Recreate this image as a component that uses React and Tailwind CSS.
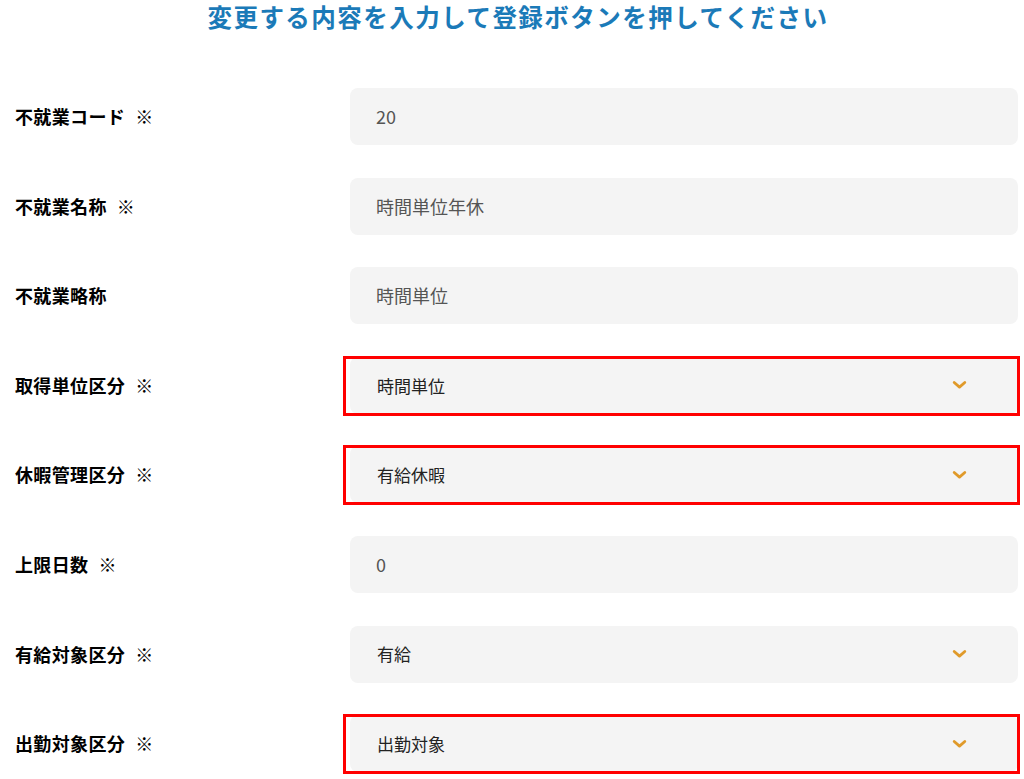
import React from 'react';

const rows = [
  { label: '不就業コード', required: true, value: '20', type: 'input' },
  { label: '不就業名称', required: true, value: '時間単位年休', type: 'input' },
  { label: '不就業略称', required: false, value: '時間単位', type: 'input' },
  { label: '取得単位区分', required: true, value: '時間単位', type: 'select', marked: true },
  { label: '休暇管理区分', required: true, value: '有給休暇', type: 'select', marked: true },
  { label: '上限日数', required: true, value: '0', type: 'input' },
  { label: '有給対象区分', required: true, value: '有給', type: 'select' },
  { label: '出勤対象区分', required: true, value: '出勤対象', type: 'select', marked: true }
];

const Chevron = () => (
  <svg width="15" height="10" viewBox="0 0 15 10" fill="none">
    <path
      d="M2.2 2.5l5.3 4.6 5.3-4.6"
      stroke="#e09a2a"
      strokeWidth="2.8"
      strokeLinecap="round"
      strokeLinejoin="round"
    />
  </svg>
);

const Field = ({ row }) => {
  if (row.type === 'select') {
    return (
      <div className="relative flex-1">
        <div className="flex h-[57px] items-center justify-between rounded-lg bg-[#f4f4f4] pl-[27px] pr-[51px]">
          <span className="text-[17px] text-[#222]">{row.value}</span>
          <Chevron />
        </div>
        {/* red annotation frame */}
        {row.marked && (
          <div className="pointer-events-none absolute -top-[1px] -bottom-[2px] -left-[7px] -right-[2px] border-[3px] border-[#ff0000]" />
        )}
      </div>
    );
  }
  return (
    <div className="flex h-[57px] flex-1 items-center rounded-lg bg-[#f4f4f4] pl-[26px]">
      <span className="text-[18px] text-[#555]">{row.value}</span>
    </div>
  );
};

const App = () => {
  return (
    <div
      className="min-h-[779px] w-[1024px] bg-white"
      style={{ fontFamily: '"Noto Sans CJK JP", "Noto Sans", sans-serif' }}
    >
      <h1 className="h-[34px] pl-[12px] text-center text-[24.5px] font-bold leading-[34px] tracking-[0.06em] text-[#1b7ab8]">
        変更する内容を入力して登録ボタンを押してください
      </h1>

      <div className="mt-[54px] flex flex-col gap-[32.6px] pl-[15px] pr-[6px]">
        {rows.map((row) => (
          <div key={row.label} className="flex items-center">
            <div className="w-[335px] text-[18px] font-bold tracking-[0.02em] text-black">
              {row.label}
              {row.required && <span className="ml-[10px] font-normal">※</span>}
            </div>
            <Field row={row} />
          </div>
        ))}
      </div>
    </div>
  );
};

export default App;
